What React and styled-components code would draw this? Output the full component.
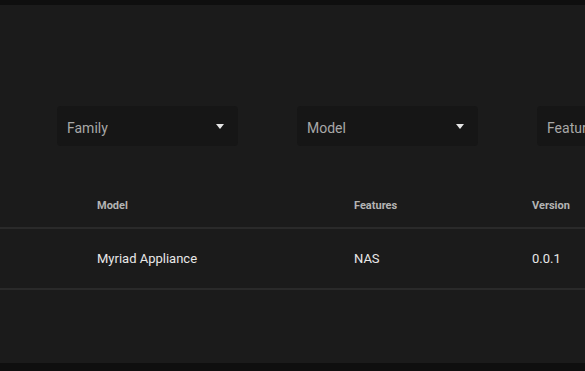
import React from "react";
import styled, { createGlobalStyle } from "styled-components";

const GlobalStyle = createGlobalStyle`
  html, body {
    margin: 0;
    padding: 0;
    background: #1b1b1b;
    font-family: Roboto, "Noto Sans", Arial, sans-serif;
  }
`;

const filters = ["Family", "Model", "Features"];
const columns = [
  { key: "model", label: "Model", width: 257 },
  { key: "features", label: "Features", width: 178 },
  { key: "version", label: "Version", width: 120 },
];
const rows = [{ model: "Myriad Appliance", features: "NAS", version: "0.0.1" }];

const App = () => {
  return (
    <>
      <GlobalStyle />
      <Page>
        <TopBar />
        <Main>
          <Filters>
            {filters.map((f) => (
              <Select key={f}>
                <SelectLabel>{f}</SelectLabel>
                <Caret />
              </Select>
            ))}
          </Filters>
          <Table>
            <thead>
              <tr>
                <Spacer />
                {columns.map((c) => (
                  <Th key={c.key} style={{ width: c.width }}>
                    {c.label}
                  </Th>
                ))}
              </tr>
            </thead>
            <tbody>
              {rows.map((r) => (
                <tr key={r.model}>
                  <SpacerCell />
                  {columns.map((c) => (
                    <Td key={c.key}>{r[c.key]}</Td>
                  ))}
                </tr>
              ))}
            </tbody>
          </Table>
        </Main>
        <BottomBar />
      </Page>
    </>
  );
};

export default App;

const Page = styled.div`
  height: 371px;
  display: flex;
  flex-direction: column;
  overflow: hidden;
`;

const TopBar = styled.div`
  height: 5px;
  background: #0f0f0f;
  flex-shrink: 0;
`;

const BottomBar = styled.div`
  height: 8px;
  background: #0f0f0f;
  flex-shrink: 0;
`;

const Main = styled.main`
  flex: 1;
  padding-top: 101px;
  overflow: hidden;
`;

const Filters = styled.div`
  display: flex;
  gap: 59px;
  padding-left: 57px;
  white-space: nowrap;
`;

const Select = styled.div`
  flex: 0 0 181px;
  height: 40px;
  box-sizing: border-box;
  padding: 3px 14px 0 10px;
  display: flex;
  align-items: center;
  justify-content: space-between;
  background: #161616;
  border-radius: 4px;
`;

const SelectLabel = styled.span`
  font-size: 14px;
  color: #a8a8a8;
`;

const Caret = styled.span`
  margin-top: -2px;
  width: 0;
  height: 0;
  border-left: 4.5px solid transparent;
  border-right: 4.5px solid transparent;
  border-top: 5px solid #e6e6e6;
`;

const Table = styled.table`
  margin-top: 44px;
  width: 100%;
  border-collapse: collapse;
  table-layout: fixed;
`;

const Spacer = styled.th`
  width: 97px;
  padding: 0;
  border-bottom: 2px solid #2a2a2a;
`;

const SpacerCell = styled.td`
  padding: 0;
  border-bottom: 2px solid #2a2a2a;
`;

const Th = styled.th`
  height: 31px;
  padding: 0 0 6px;
  text-align: left;
  font-size: 11px;
  font-weight: 700;
  color: #b4b4b4;
  border-bottom: 2px solid #2a2a2a;
  white-space: nowrap;
`;

const Td = styled.td`
  height: 59px;
  padding: 0;
  font-size: 13px;
  color: #e8e8e8;
  border-bottom: 2px solid #2a2a2a;
  white-space: nowrap;
`;
